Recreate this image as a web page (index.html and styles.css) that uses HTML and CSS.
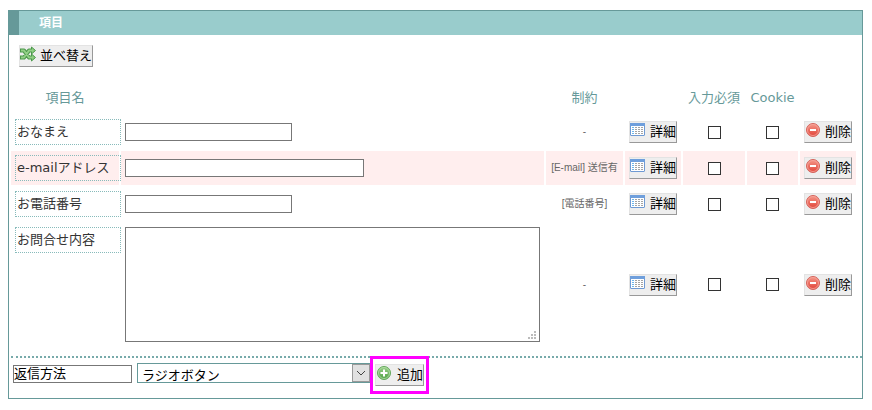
FILE: index.html
```html
<!DOCTYPE html>
<html lang="ja">
<head>
<meta charset="utf-8">
<title>項目</title>
<link rel="stylesheet" href="styles.css">
</head>
<body>
<svg class="defs" aria-hidden="true">
  <linearGradient id="red" x1="0" y1="0" x2="0" y2="1"><stop offset="0" stop-color="#f59a8c"/><stop offset="1" stop-color="#e04035"/></linearGradient>
  <linearGradient id="green" x1="0" y1="0" x2="0" y2="1"><stop offset="0" stop-color="#9bd08a"/><stop offset="1" stop-color="#4fa045"/></linearGradient>
  <symbol id="detail" viewBox="0 0 16 16">
    <rect x=".5" y="1.5" width="14" height="12" rx=".5" fill="#fff" stroke="#6f9ad3"/>
    <path d="M0 1h15v3H0z" fill="#6f9fdc"/>
    <path d="M2 5.500h2M2 7.500h2M2 9.500h2M2 11.500h2" stroke="#6cb6ee"/>
    <path d="M5 5.500h8M5 7.500h8M5 9.500h8M5 11.500h8" stroke="#a4a4a4" stroke-dasharray="2 1"/>
  </symbol>
  <symbol id="delete" viewBox="0 0 16 16">
    <circle cx="8" cy="8" r="6.500" fill="url(#red)" stroke="#d4645c"/>
    <circle cx="8" cy="8" r="5.500" fill="none" stroke="#f7a79d" stroke-width=".8"/>
    <path d="M5 8h6" stroke="#fff" stroke-width="2"/>
  </symbol>
  <symbol id="add" viewBox="0 0 16 16">
    <circle cx="8" cy="8" r="6.500" fill="url(#green)" stroke="#64a85c"/>
    <circle cx="8" cy="8" r="5.500" fill="none" stroke="#b5dfaa" stroke-width=".8"/>
    <path d="M4.500 8h7M8 4.500v7" stroke="#fff" stroke-width="2"/>
  </symbol>
  <symbol id="shuffle" viewBox="0 0 16 16">
    <g fill="none" stroke-linejoin="round">
      <path d="M0 4.500h4l5 7h3M0 11.500h4l5-7h3" stroke="#4c994c" stroke-width="4"/>
      <path d="M11.500 1l4 3.500-4 3.500zM11.500 8l4 3.500-4 3.500z" fill="#8acb7c" stroke="#4c994c"/>
      <path d="M1 4.500h3l5 7h4M1 11.500h3l5-7h4" stroke="#92cf86" stroke-width="2"/>
    </g>
  </symbol>
</svg>

<form class="panel">
  <h2 class="panel-title">項目</h2>
  <div class="toolbar">
    <button type="button" class="btn"><svg class="icon"><use href="#shuffle"/></svg>並べ替え</button>
  </div>
  <table class="fields">
    <colgroup><col class="c-name"><col><col class="c-rule"><col class="c-btn"><col class="c-required"><col class="c-cookie"><col class="c-btn"></colgroup>
    <thead>
      <tr><th>項目名</th><td></td><th>制約</th><td></td><th>入力必須</th><th>Cookie</th><td></td></tr>
    </thead>
    <tbody>
      <tr>
        <td><label class="name" for="f1">おなまえ</label></td>
        <td><input class="text" id="f1" type="text"></td>
        <td class="rule">-</td>
        <td><button type="button" class="btn"><svg class="icon"><use href="#detail"/></svg>詳細</button></td>
        <td><input class="check" type="checkbox" aria-label="入力必須"></td>
        <td><input class="check" type="checkbox" aria-label="Cookie"></td>
        <td><button type="button" class="btn"><svg class="icon"><use href="#delete"/></svg>削除</button></td>
      </tr>
      <tr class="active">
        <td><label class="name" for="f2">e-mailアドレス</label></td>
        <td><input class="text wide" id="f2" type="text"></td>
        <td class="rule">[E-mail] 送信有</td>
        <td><button type="button" class="btn"><svg class="icon"><use href="#detail"/></svg>詳細</button></td>
        <td><input class="check" type="checkbox" aria-label="入力必須"></td>
        <td><input class="check" type="checkbox" aria-label="Cookie"></td>
        <td><button type="button" class="btn"><svg class="icon"><use href="#delete"/></svg>削除</button></td>
      </tr>
      <tr>
        <td><label class="name" for="f3">お電話番号</label></td>
        <td><input class="text" id="f3" type="text"></td>
        <td class="rule">[電話番号]</td>
        <td><button type="button" class="btn"><svg class="icon"><use href="#detail"/></svg>詳細</button></td>
        <td><input class="check" type="checkbox" aria-label="入力必須"></td>
        <td><input class="check" type="checkbox" aria-label="Cookie"></td>
        <td><button type="button" class="btn"><svg class="icon"><use href="#delete"/></svg>削除</button></td>
      </tr>
      <tr>
        <td class="top"><label class="name" for="f4">お問合せ内容</label></td>
        <td><div class="area-wrap"><textarea class="area" id="f4"></textarea><svg class="grip" viewBox="0 0 8 8"><path d="M6 0h2v2H6zM3 3h2v2H3zM6 3h2v2H6zM0 6h2v2H0zM3 6h2v2H3zM6 6h2v2H6z"/></svg></div></td>
        <td class="rule">-</td>
        <td><button type="button" class="btn"><svg class="icon"><use href="#detail"/></svg>詳細</button></td>
        <td><input class="check" type="checkbox" aria-label="入力必須"></td>
        <td><input class="check" type="checkbox" aria-label="Cookie"></td>
        <td><button type="button" class="btn"><svg class="icon"><use href="#delete"/></svg>削除</button></td>
      </tr>
    </tbody>
  </table>
  <div class="add-row">
    <input class="text new-name" type="text" value="返信方法" aria-label="項目名">
    <div class="select-wrap">
      <select class="select" aria-label="種類"><option>ラジオボタン</option></select>
      <svg class="arrow" viewBox="0 0 18 18"><rect x=".5" y=".5" width="17" height="17"/><path d="M5 7l4 4 4-4"/></svg>
    </div>
    <div class="highlight"><button type="button" class="btn"><svg class="icon"><use href="#add"/></svg>追加</button></div>
  </div>
</form>
</body>
</html>
```
FILE: styles.css
```css
* {
  box-sizing: border-box;
}

body {
  margin: 10px 9px 10px 8px;
  background: #fff;
  color: #333;
  font: 13px/20px "DejaVu Sans", "Noto Sans CJK JP", sans-serif;
}

.defs {
  position: absolute;
  width: 0;
  height: 0;
}

.panel {
  border: 1px solid #699;
}

.panel-title {
  margin: 0;
  padding-left: 20px;
  border-left: 10px solid #699;
  background: #9cc;
  color: #fff;
  font-size: 12px;
  line-height: 24px;
}

.toolbar {
  display: flex;
  padding: 10px 10px 12px;
}

.btn {
  display: flex;
  gap: 4px;
  height: 22px;
  padding: 0;
  border: 1px solid;
  border-color: #e3e3e3 #999 #999 #e3e3e3;
  background: #eee;
  color: #000;
  font: inherit;
  white-space: nowrap;
}

.icon {
  flex: none;
  width: 16px;
  height: 16px;
}

.fields {
  width: calc(100% - 4px);
  table-layout: fixed;
  border-spacing: 2px;
}

.c-name { width: 108px; }
.c-rule { width: 77px; }
.c-btn { width: 56px; }
.c-required { width: 62px; }
.c-cookie { width: 51px; }

.fields th,
.fields td {
  padding: 4px;
}

.fields th {
  height: 32px;
  padding: 2px 0 0;
  color: #699;
  font-weight: normal;
  white-space: nowrap;
}

.active td {
  background: #fee;
}

.fields .top {
  vertical-align: top;
}

.name {
  display: block;
  height: 26px;
  margin-right: -6px;
  padding-left: 1px;
  border: 1px dotted #8bb;
  line-height: 24px;
  white-space: nowrap;
}

.text {
  display: block;
  width: 167px;
  height: 18px;
  padding: 0;
  border: 1px solid #777;
  background: #fff;
  color: #000;
  font: inherit;
}

.text.wide {
  width: 239px;
}

.fields .rule {
  padding: 0;
  color: #666;
  font: 10px/14px "Liberation Sans", "Noto Sans CJK JP", sans-serif;
  text-align: center;
  white-space: nowrap;
}

.check {
  display: block;
  appearance: none;
  width: 13px;
  height: 13px;
  margin: 0 auto;
  border: 1px solid #333;
  background: #fff;
}

.check:checked {
  background: #333;
}

.area-wrap {
  position: relative;
  max-width: 415px;
}

.area {
  display: block;
  width: 100%;
  height: 115px;
  border: 1px solid #777;
  font: inherit;
  resize: none;
}

.grip {
  position: absolute;
  right: 4px;
  bottom: 3px;
  width: 8px;
  height: 8px;
  fill: #bbb;
}

.add-row {
  display: flex;
  align-items: flex-start;
  margin: 8px 0 0 2px;
  padding: 5px 2px 12px;
  border-top: 2px dotted #7aa;
}

.new-name {
  width: 119px;
  margin: 2px 5px 0 0;
}

.select-wrap {
  position: relative;
  width: 233px;
}

.select {
  display: block;
  appearance: none;
  width: 100%;
  height: 20px;
  padding: 2px 20px 0 4px;
  border: 1px solid #699;
  border-radius: 0;
  background: #fff;
  color: #000;
  font: inherit;
}

.arrow {
  position: absolute;
  top: 1px;
  right: 0;
  width: 18px;
  height: 18px;
  fill: #e1e1e1;
  stroke: #999;
  pointer-events: none;
}

.arrow path {
  fill: none;
  stroke: #444;
}

.highlight {
  position: relative;
  margin: 1px 0 0 5px;
}

.highlight .btn {
  gap: 5px;
}

.highlight::after {
  content: "";
  position: absolute;
  inset: -8px -5px;
  border: 3px solid #f0f;
  pointer-events: none;
}
```
